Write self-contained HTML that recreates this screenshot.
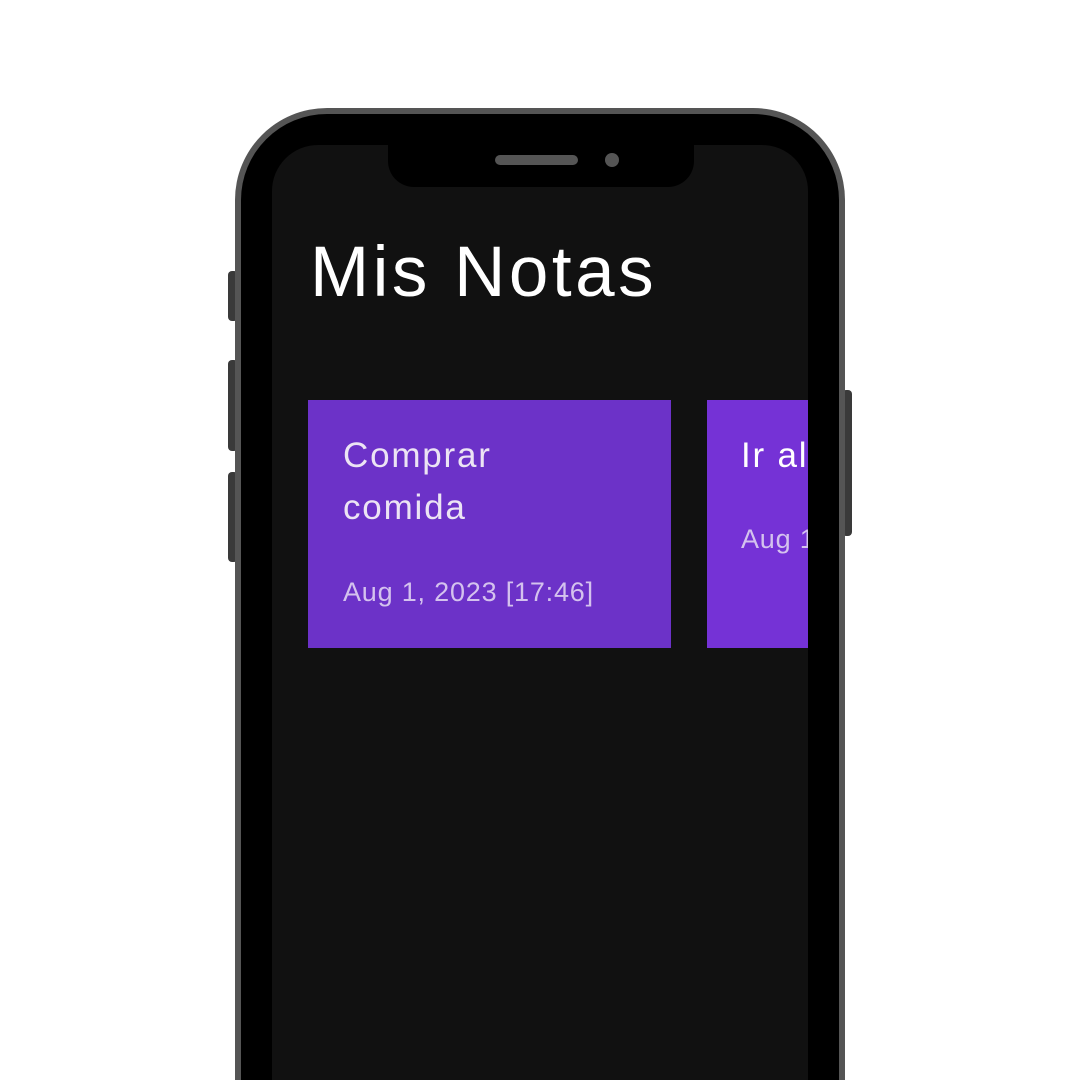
<!DOCTYPE html>
<html><head><meta charset="utf-8"><style>
html,body{margin:0;padding:0;background:#fff;width:1080px;height:1080px;overflow:hidden;font-family:"Liberation Sans",sans-serif}
#w{position:relative;width:1080px;height:1080px;overflow:hidden}
.a{position:absolute}
</style></head><body><div id="w">
<div class="a" style="left:228px;top:271px;width:10px;height:50px;background:#3a3a3a;border-radius:4px"></div>
<div class="a" style="left:228px;top:360px;width:10px;height:91px;background:#3a3a3a;border-radius:4px"></div>
<div class="a" style="left:228px;top:472px;width:10px;height:90px;background:#3a3a3a;border-radius:4px"></div>
<div class="a" style="left:842px;top:390px;width:10px;height:146px;background:#3a3a3a;border-radius:4px"></div>
<div class="a" style="left:235px;top:108px;width:598px;height:966px;border:6px solid #555;border-bottom:none;background:#000;border-radius:92px 92px 0 0"></div>
<div class="a" style="left:272px;top:145px;width:536px;height:935px;background:#111;border-radius:46px 46px 0 0;overflow:hidden">
  <div class="a" style="left:116px;top:-2px;width:306px;height:44px;background:#000;border-radius:0 0 26px 26px"></div>
  <div class="a" style="left:223px;top:10px;width:83px;height:10px;background:#555;border-radius:5px"></div>
  <div class="a" style="left:333px;top:8px;width:14px;height:14px;background:#555;border-radius:50%"></div>
  <div class="a" style="left:38px;top:88px;font-size:71px;color:#fff;letter-spacing:3.5px;line-height:80px;white-space:nowrap">Mis Notas</div>
  <div class="a" style="left:36px;top:255px;width:363px;height:248px;background:#6c32c8"></div>
  <div class="a" style="left:435px;top:255px;width:110px;height:248px;background:#7532d6"></div>
  <div class="a" style="left:71px;top:285px;font-size:35px;line-height:52px;color:#ece4f4;letter-spacing:1.8px">Comprar<br>comida</div>
  <div class="a" style="left:71px;top:427px;font-size:27px;line-height:40px;color:#d4c2ee;letter-spacing:0.8px;white-space:nowrap">Aug 1, 2023 [17:46]</div>
  <div class="a" style="left:469px;top:285px;font-size:35px;line-height:52px;color:#fff;letter-spacing:1.8px;white-space:nowrap">Ir al</div>
  <div class="a" style="left:469px;top:374px;font-size:27px;line-height:40px;color:#d4c2ee;letter-spacing:0.8px;white-space:nowrap">Aug 1</div>
</div>
</div></body></html>
